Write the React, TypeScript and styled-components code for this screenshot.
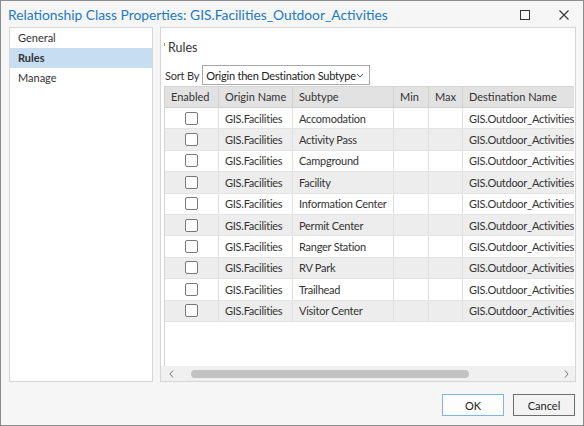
import styled, { createGlobalStyle } from 'styled-components'

const GlobalStyle = createGlobalStyle`
  html, body {
    margin: 0;
    padding: 0;
    background: #f5f6f5;
  }
  * {
    box-sizing: border-box;
  }
`

const FONT = `Lato, "Noto Sans", sans-serif`

const subtypes = [
  'Accomodation',
  'Activity Pass',
  'Campground',
  'Facility',
  'Information Center',
  'Permit Center',
  'Ranger Station',
  'RV Park',
  'Trailhead',
  'Visitor Center',
]

const columns = [
  { name: 'Enabled', width: 54 },
  { name: 'Origin Name', width: 74 },
  { name: 'Subtype', width: 101 },
  { name: 'Min', width: 35 },
  { name: 'Max', width: 34 },
  { name: 'Destination Name', width: 170 },
]

const gridTemplate = columns.map(c => `${c.width}px`).join(' ')

export default function App() {
  return (
    <>
      <GlobalStyle />
      <Window>
        <TitleBar>
          <Title>Relationship Class Properties: GIS.Facilities_Outdoor_Activities</Title>
          <WindowButtons>
            <svg width="10" height="10" viewBox="0 0 10 10">
              <rect x="0.5" y="0.5" width="9" height="9" fill="none" stroke="#333" strokeWidth="1" />
            </svg>
            <svg width="10" height="10" viewBox="0 0 10 10">
              <path d="M0.5 0.5 L9.5 9.5 M9.5 0.5 L0.5 9.5" stroke="#333" strokeWidth="1.1" />
            </svg>
          </WindowButtons>
        </TitleBar>

        <Body>
          <Sidebar>
            <NavItem>General</NavItem>
            <NavItem selected>Rules</NavItem>
            <NavItem>Manage</NavItem>
          </Sidebar>

          <Panel>
            <SectionHeader>
              <Expander />
              Rules
            </SectionHeader>

            <SortRow>
              <SortLabel>Sort By</SortLabel>
              <Dropdown>
                <span>Origin then Destination Subtype</span>
                <svg width="8" height="5" viewBox="0 0 8 5">
                  <path d="M1 1 L4 4 L7 1" fill="none" stroke="#555" strokeWidth="1" />
                </svg>
              </Dropdown>
            </SortRow>

            <TableArea>
              <TableViewport>
                <HeaderRow>
                  {columns.map(c => (
                    <HeaderCell key={c.name}>{c.name}</HeaderCell>
                  ))}
                </HeaderRow>
                {subtypes.map((s, i) => (
                  <Row key={s} striped={i % 2 === 1}>
                    <Cell center>
                      <Checkbox />
                    </Cell>
                    <Cell>GIS.Facilities</Cell>
                    <Cell>{s}</Cell>
                    <Cell />
                    <Cell />
                    <Cell>GIS.Outdoor_Activities</Cell>
                  </Row>
                ))}
              </TableViewport>
              <HScrollbar>
                <svg width="5" height="8" viewBox="0 0 5 8">
                  <path d="M4 0.5 L1 4 L4 7.5" fill="none" stroke="#777" strokeWidth="1" />
                </svg>
                <Thumb />
                <svg width="5" height="8" viewBox="0 0 5 8">
                  <path d="M1 0.5 L4 4 L1 7.5" fill="none" stroke="#777" strokeWidth="1" />
                </svg>
              </HScrollbar>
            </TableArea>
          </Panel>
        </Body>

        <Footer>
          <Button primary>OK</Button>
          <Button>Cancel</Button>
        </Footer>
      </Window>
    </>
  )
}

// #region CSS

const Window = styled.div`
  width: 584px;
  height: 426px;
  border: 1px solid #8c8c8c;
  background: #f5f6f5;
  display: flex;
  flex-direction: column;
  font-family: ${FONT};
  color: #333;
  overflow: hidden;
`

const TitleBar = styled.div`
  height: 26px;
  flex: none;
  display: flex;
  align-items: center;
  justify-content: space-between;
  padding: 0 14px 0 7px;
`

const Title = styled.div`
  font-size: 13.8px;
  color: #1e78c8;
  white-space: nowrap;
`

const WindowButtons = styled.div`
  display: flex;
  align-items: center;
  gap: 29px;
  padding-top: 1px;
`

const Body = styled.div`
  height: 355px;
  flex: none;
  display: flex;
  gap: 7px;
  padding: 0 8px 0 8px;
`

const Sidebar = styled.div`
  width: 144px;
  flex: none;
  background: #fff;
  border: 1px solid #d6d6d6;
  display: flex;
  flex-direction: column;
`

const NavItem = styled.div<{ selected?: boolean }>`
  height: 20px;
  line-height: 19px;
  padding-left: 8px;
  font-size: 11px;
  font-weight: ${p => (p.selected ? 700 : 400)};
  background: ${p => (p.selected ? '#c7ddf1' : 'transparent')};
  color: #333;
`

const Panel = styled.div`
  width: 416px;
  flex: none;
  background: #fff;
  border: 1px solid #d6d6d6;
  display: flex;
  flex-direction: column;
  padding-left: 3px;
  overflow: hidden;
`

const SectionHeader = styled.div`
  display: flex;
  align-items: center;
  gap: 3px;
  height: 16px;
  margin-top: 11px;
  font-size: 12.5px;
  color: #333;
`

const Expander = styled.span`
  width: 1px;
  height: 3px;
  background: #999;
  align-self: flex-start;
  margin-top: 4px;
`

const SortRow = styled.div`
  display: flex;
  align-items: center;
  gap: 3px;
  margin-top: 10px;
  height: 20px;
`

const SortLabel = styled.span`
  font-size: 11px;
  letter-spacing: -0.2px;
  color: #333;
  padding-left: 1px;
`

const Dropdown = styled.div`
  width: 168px;
  height: 20px;
  border: 1px solid #a8a8a8;
  background: #fff;
  display: flex;
  align-items: center;
  justify-content: space-between;
  padding: 0 5px 0 3px;
  font-size: 11px;
  letter-spacing: -0.2px;
  color: #222;
  white-space: nowrap;

  svg {
    flex: none;
  }
`

const TableArea = styled.div`
  margin-top: 1px;
  flex: 1;
  display: flex;
  flex-direction: column;
  margin-left: -3px;
`

const TableViewport = styled.div`
  flex: 1;
  margin-left: 3px;
  width: 410px;
  border-left: 1px solid #d4d4d4;
  border-top: 1px solid #d4d4d4;
  overflow: hidden;
`

const HeaderRow = styled.div`
  display: grid;
  grid-template-columns: ${gridTemplate};
  width: max-content;
  height: 21px;
  background: #e2e2e2;
  border-bottom: 1px solid #d0d0d0;
`

const HeaderCell = styled.div`
  font-size: 11px;
  line-height: 20px;
  padding-left: 6px;
  border-right: 1px solid #d0d0d0;
  white-space: nowrap;
  color: #333;
`

const Row = styled.div<{ striped?: boolean }>`
  display: grid;
  grid-template-columns: ${gridTemplate};
  width: max-content;
  height: 21.4px;
  background: ${p => (p.striped ? '#ededed' : '#fff')};
  border-bottom: 1px solid #e4e4e4;
`

const Cell = styled.div<{ center?: boolean }>`
  display: flex;
  align-items: center;
  justify-content: ${p => (p.center ? 'center' : 'flex-start')};
  padding-left: ${p => (p.center ? '0' : '6px')};
  font-size: 11px;
  letter-spacing: -0.25px;
  white-space: nowrap;
  border-right: 1px solid #e0e0e0;
  color: #333;
`

const Checkbox = styled.span`
  width: 13px;
  height: 13px;
  border: 1px solid #7a7a7a;
  border-radius: 2px;
  background: #fff;
`

const HScrollbar = styled.div`
  height: 15px;
  flex: none;
  background: #f0f0f0;
  display: flex;
  align-items: center;
  padding: 0 6px 0 8px;

  svg {
    flex: none;
  }
`

const Thumb = styled.div`
  margin-left: 17px;
  width: 278px;
  height: 8px;
  border-radius: 4px;
  background: #c2c2c2;
  margin-right: auto;
`

const Footer = styled.div`
  flex: 1;
  display: flex;
  justify-content: flex-end;
  align-items: flex-start;
  gap: 9px;
  padding: 12px 8px 0 0;
`

const Button = styled.div<{ primary?: boolean }>`
  width: 62px;
  height: 22px;
  display: flex;
  align-items: center;
  justify-content: center;
  font-size: 11px;
  color: #222;
  background: ${p => (p.primary ? '#fdfdfd' : '#f3f3f3')};
  border: 1px solid ${p => (p.primary ? '#7fb4e6' : '#6e6e6e')};
`

// #endregion
